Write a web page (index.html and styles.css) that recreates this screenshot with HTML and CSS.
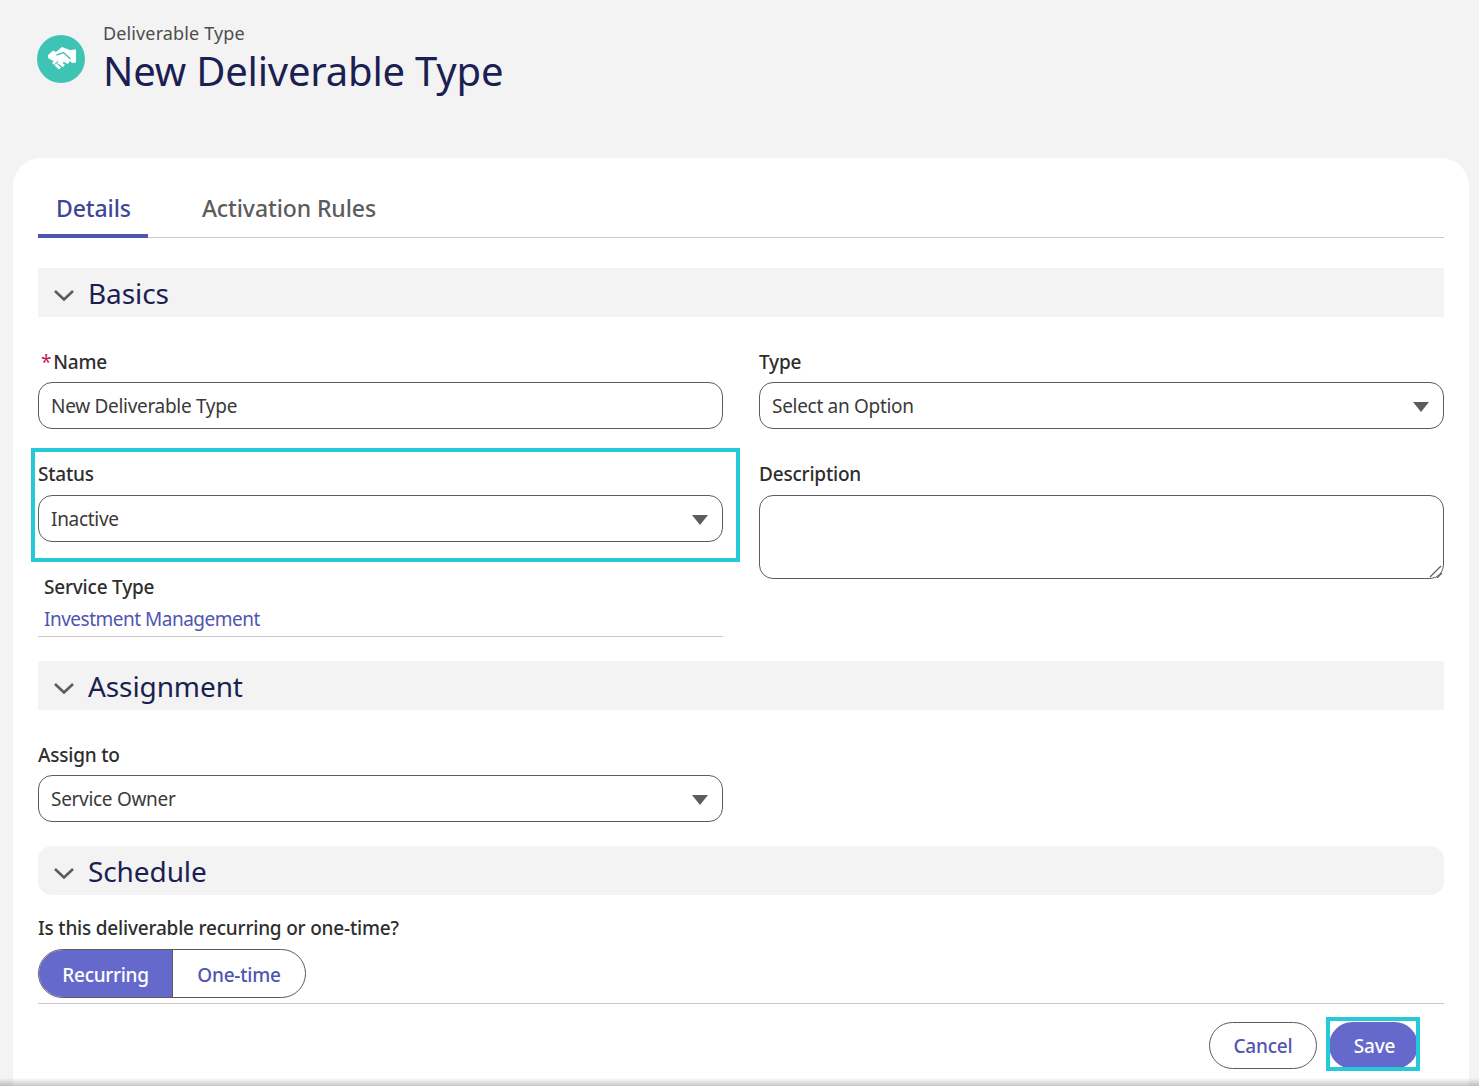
FILE: index.html

```html
<!DOCTYPE html>
<html>
<head>
    <title>New Deliverable Type</title>
    <link rel="stylesheet" href="styles.css">
</head>
<body>
    <header class="page-head">
        <div class="head-icon">
            <svg width="48" height="48" viewBox="0 0 48 48">
                <circle cx="24" cy="24" r="24" fill="#3dc4b4"/>
                <path d="M11 20 L16 15.5 L19 17 L25 12 L33 15 L39 14.5 L39 27.5 L35 28 L33 26 L31 29 L27 27 L23 29 L18 27 L11 23Z" fill="#fff"/>
                <path d="M19.5 20 L26.5 17.5 L33.5 24" fill="none" stroke="#3dc4b4" stroke-width="1.5"/>
                <path d="M16 27 L23 33.5 M21 26.5 L27 31" fill="none" stroke="#fff" stroke-width="3"/>
                <path d="M17 30.5 L21 26" fill="none" stroke="#3dc4b4" stroke-width="1"/>
            </svg>
        </div>
        <div>
            <div class="head-small">Deliverable Type</div>
            <h1>New Deliverable Type</h1>
        </div>
    </header>

    <main class="card">
        <nav class="tabs">
            <a class="tab active">Details</a>
            <a class="tab">Activation Rules</a>
        </nav>

        <section class="section first">
            <div class="section-head">
                <svg class="chev" width="22" height="12" viewBox="0 0 22 12"><path d="M2 2 L11 10.5 L20 2" fill="none" stroke="#5c5c5c" stroke-width="2.6"/></svg>
                <h2>Basics</h2>
            </div>
            <div class="grid">
                <div class="col">
                    <div class="field">
                        <label><span class="req">*</span>Name</label>
                        <div class="box">New Deliverable Type</div>
                    </div>
                    <div class="field lifted">
                        <label>Status</label>
                        <div class="box">Inactive<span class="arrow"></span></div>
                        <div class="mark-status"></div>
                    </div>
                    <div class="field service">
                        <label>Service Type</label>
                        <div class="service-value"><a>Investment Management</a></div>
                    </div>
                </div>
                <div class="col">
                    <div class="field">
                        <label>Type</label>
                        <div class="box">Select an Option<span class="arrow"></span></div>
                    </div>
                    <div class="field lifted">
                        <label>Description</label>
                        <div class="text-wrap">
                            <textarea></textarea>
                            <svg class="grip" width="14" height="14" viewBox="0 0 14 14"><path d="M1 13 L12 2 M8 14 L13 9" fill="none" stroke="#5c5c5c" stroke-width="1.2"/></svg>
                        </div>
                    </div>
                </div>
            </div>
        </section>

        <section class="section">
            <div class="section-head">
                <svg class="chev" width="22" height="12" viewBox="0 0 22 12"><path d="M2 2 L11 10.5 L20 2" fill="none" stroke="#5c5c5c" stroke-width="2.6"/></svg>
                <h2>Assignment</h2>
            </div>
            <div class="grid">
                <div class="col">
                    <div class="field">
                        <label>Assign to</label>
                        <div class="box">Service Owner<span class="arrow"></span></div>
                    </div>
                </div>
            </div>
        </section>

        <section class="section">
            <div class="section-head rounded">
                <svg class="chev" width="22" height="12" viewBox="0 0 22 12"><path d="M2 2 L11 10.5 L20 2" fill="none" stroke="#5c5c5c" stroke-width="2.6"/></svg>
                <h2>Schedule</h2>
            </div>
            <div class="question">Is this deliverable recurring or one-time?</div>
            <div class="toggle">
                <span class="opt on">Recurring</span>
                <span class="opt">One-time</span>
            </div>
        </section>

        <footer class="actions">
            <button class="btn cancel" type="button">Cancel</button>
            <button class="btn save" type="button">Save<span class="mark-save"></span></button>
        </footer>
    </main>
    <div class="bottom-shade"></div>
</body>
</html>
```

FILE: styles.css

```css
body {
    margin: 0;
    padding: 0;
    height: 1086px;
    overflow: hidden;
    position: relative;
    font-family: "Noto Sans", "Open Sans", sans-serif;
    background-color: #f3f3f3;
    color: #2e2e2e;
}

.page-head {
    display: flex;
    align-items: flex-start;
    gap: 18px;
    height: 158px;
    padding: 19px 0 0 37px;
    box-sizing: border-box;
}

.head-icon {
    margin-top: 16px;
    height: 48px;
}

.head-small {
    font-size: 18px;
    line-height: 28px;
    color: #4d4d4d;
    letter-spacing: 0.13px;
}

h1 {
    margin: 0;
    font-size: 40px;
    line-height: 48px;
    font-weight: 400;
    color: #1b1f52;
    letter-spacing: -0.2px;
}

.card {
    margin: 0 10px 0 13px;
    height: 928px;
    padding: 0 25px;
    box-sizing: border-box;
    background: #fff;
    border-radius: 28px 28px 0 0;
}

.bottom-shade {
    position: absolute;
    left: 0;
    right: 0;
    bottom: 0;
    height: 8px;
    background: linear-gradient(to bottom, rgba(0, 0, 0, 0), rgba(0, 0, 0, 0.22));
}

.tabs {
    display: flex;
    height: 80px;
    box-sizing: border-box;
    align-items: flex-end;
    border-bottom: 1px solid #c9c9c9;
}

.tab {
    font-size: 23px;
    font-weight: 500;
    line-height: 30px;
    padding: 0 18px 15px;
    color: #5c5c5c;
    margin-right: 36px;
    margin-bottom: -1px;
    letter-spacing: -0.1px;
}

.tab.active {
    color: #3f4796;
    border-bottom: 4px solid #4f55b0;
    padding-bottom: 11px;
    padding-right: 17px;
}

.section {
    margin-top: 24px;
}

.section.first {
    margin-top: 30px;
}

.section-head {
    display: flex;
    align-items: center;
    height: 49px;
    background: #f3f3f3;
    padding-left: 15px;
}

.section-head.rounded {
    border-radius: 14px;
}

.chev {
    margin-top: 4px;
    margin-right: 13px;
}

h2 {
    margin: 0;
    font-size: 28px;
    font-weight: 400;
    color: #1b1f52;
    letter-spacing: -0.1px;
}

.grid {
    display: grid;
    grid-template-columns: 685px 685px;
    column-gap: 36px;
    margin-top: 32px;
}

.field {
    position: relative;
}

.field + .field {
    margin-top: 33px;
}

.field label,
.question {
    display: block;
    font-size: 19px;
    font-weight: 500;
    line-height: 26px;
    margin-bottom: 7px;
    color: #2e2e2e;
    letter-spacing: -0.2px;
}

.lifted label {
    margin-top: -1px;
    margin-bottom: 8px;
}

.req {
    color: #c2185b;
    margin: 0 2px 0 3px;
    font-weight: 400;
}

.box {
    position: relative;
    height: 47px;
    box-sizing: border-box;
    border: 1px solid #5c5c5c;
    border-radius: 14px;
    background: #fff;
    padding: 1px 12px 0;
    font-size: 19px;
    line-height: 45px;
    color: #3a3a3a;
    letter-spacing: -0.3px;
}

.arrow {
    position: absolute;
    right: 14px;
    top: 19px;
    width: 0;
    height: 0;
    border-left: 8px solid transparent;
    border-right: 8px solid transparent;
    border-top: 10px solid #5c5c5c;
}

.text-wrap {
    position: relative;
}

textarea {
    display: block;
    width: 100%;
    height: 84px;
    box-sizing: border-box;
    border: 1px solid #5c5c5c;
    border-radius: 14px;
    outline: none;
    background: #fff;
    resize: none;
}

.grip {
    position: absolute;
    right: 1px;
    bottom: 1px;
}

.mark-status {
    position: absolute;
    left: -7px;
    top: -13px;
    width: 709px;
    height: 114px;
    box-sizing: border-box;
    border: 4px solid #26c9d8;
}

.field.service {
    margin-top: 32px;
}

.service label {
    margin-left: 6px;
    margin-bottom: 3px;
}

.service-value {
    padding: 0 6px;
    height: 34px;
    box-sizing: border-box;
    font-size: 19px;
    line-height: 32px;
    color: #4f55b0;
    border-bottom: 1px solid #c9c9c9;
    letter-spacing: -0.5px;
}

.question {
    margin-top: 20px;
    margin-bottom: 8px;
}

.toggle {
    display: inline-flex;
    height: 49px;
    box-sizing: border-box;
    border: 1px solid #5c5c5c;
    border-radius: 25px;
    overflow: hidden;
    vertical-align: top;
}

.opt {
    width: 132px;
    font-size: 19px;
    font-weight: 500;
    line-height: 50px;
    text-align: center;
    color: #4f55b0;
    letter-spacing: -0.2px;
}

.opt.on {
    width: 134px;
    box-sizing: border-box;
    background: #6569cc;
    color: #fff;
    border-right: 1px solid #5c5c5c;
    letter-spacing: -0.3px;
}

.actions {
    display: flex;
    justify-content: flex-end;
    gap: 12px;
    margin-top: 5px;
    padding: 18px 26px 0 0;
    border-top: 1px solid #c9c9c9;
}

.btn {
    height: 47px;
    border-radius: 24px;
    font-family: inherit;
    font-size: 19px;
    font-weight: 500;
    letter-spacing: -0.2px;
    padding: 0;
}

.cancel {
    width: 108px;
    background: #fff;
    border: 1px solid #5c5c5c;
    color: #4f55b0;
}

.save {
    position: relative;
    width: 89px;
    padding-left: 2px;
    background: #6569cc;
    border: none;
    color: #fff;
}

.mark-save {
    position: absolute;
    left: -3px;
    top: -5px;
    width: 94px;
    height: 54px;
    box-sizing: border-box;
    border: 4px solid #26c9d8;
}
```
